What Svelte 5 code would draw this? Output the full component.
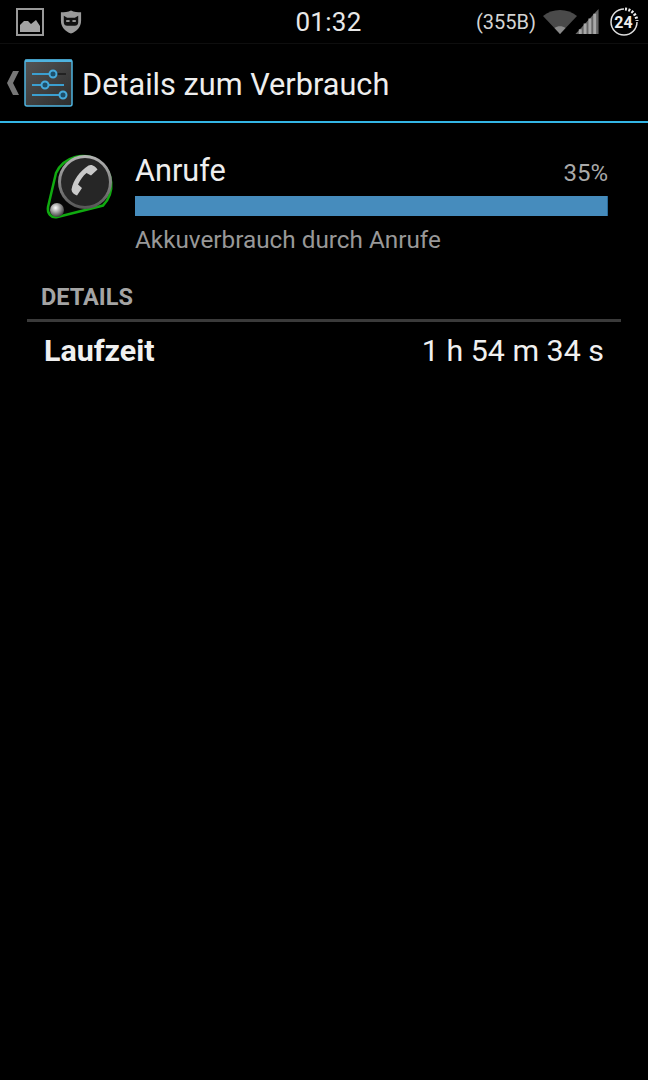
<script>
    const percent = 35;
</script>

<div class="screen">
    <header class="status-bar">
        <div class="status-left">
            <svg class="ic-picture" width="28" height="28" viewBox="0 0 28 28">
                <rect x="1" y="1" width="26" height="26" fill="none" stroke="#999" stroke-width="2" />
                <path d="M4 24V17L8 13 12 13 15 16 20 12 24 18V24Z" fill="#a3a3a3" />
            </svg>
            <svg class="ic-shield" width="22" height="25" viewBox="0 0 22 26">
                <path d="M11 1.500C8 3 4 3.500.5 3.500V12C.5 19 5 23.500 11 25.500 17 23.500 21.500 19 21.500 12V3.500C18 3.500 14 3 11 1.500Z" fill="#9a9a9a" />
                <path d="M3.500 7 7 9H15L18.500 7V14C18.500 16 17 17.500 15 17.500H7C5 17.500 3.500 16 3.500 14Z" fill="#111" />
                <rect x="6" y="11.500" width="3.500" height="2" fill="#999" />
                <rect x="12.500" y="11.500" width="3.500" height="2" fill="#999" />
            </svg>
        </div>
        <div class="clock">01:32</div>
        <div class="status-right">
            <span class="traffic">(355B)</span>
            <svg class="ic-wifi" width="34" height="24" viewBox="0 0 34 24">
                <path d="M0 6C9-2 25-2 34 6L17 24Z" fill="#4a4a4a" />
                <path d="M11.500 18C14.500 15.500 19.500 15.500 22.500 18L17 24Z" fill="#8a8a8a" />
            </svg>
            <svg class="ic-signal" width="24" height="25" viewBox="0 0 24 26">
                <path d="M0 26 24 0V26Z" fill="#666" />
                <path d="M5 26V21M10 26V15M15 26V10M20 26V5" stroke="#a8a8a8" stroke-width="3" />
            </svg>
            <svg class="ic-battery" width="30" height="30" viewBox="0 0 30 30">
                <path d="M15 2A13 13 0 1 0 28 15" fill="none" stroke="#ddd" stroke-width="1.500" />
                <path d="M16 2A13 13 0 0 1 28 14" fill="none" stroke="#eee" stroke-width="3" stroke-dasharray="2 1.500" />
                <text x="14.500" y="21" text-anchor="middle" class="battery-num">24</text>
            </svg>
        </div>
    </header>

    <div class="action-bar">
        <svg class="ic-back" width="12" height="24" viewBox="0 0 12 24">
            <path d="M6 0H12L6 12 12 24H6L0 12Z" fill="#777" />
        </svg>
        <svg class="ic-settings" width="49" height="48" viewBox="0 0 49 48">
            <defs>
                <linearGradient id="tile" x1="0" y1="0" x2="1" y2="1">
                    <stop offset="0" stop-color="#555" />
                    <stop offset="1" stop-color="#2c2c2c" />
                </linearGradient>
            </defs>
            <rect x="1" y="1" width="47" height="46" rx="2" fill="url(#tile)" stroke="#4fb4e0" stroke-width="1.500" />
            <rect x="1" y="0.500" width="47" height="2.500" fill="#4fb4e0" />
            <path d="M8 15H29M8 26H40M8 36H39" stroke="#3b9fd0" stroke-width="2" />
            <path d="M33 15H42" stroke="#222" stroke-width="2" />
            <circle cx="29" cy="15" r="3.500" fill="#1d4f6a" stroke="#45aadc" stroke-width="2" />
            <circle cx="21" cy="26" r="3.500" fill="#1d4f6a" stroke="#45aadc" stroke-width="2" />
            <circle cx="39" cy="36" r="3.500" fill="#1d4f6a" stroke="#45aadc" stroke-width="2" />
        </svg>
        <h1>Details zum Verbrauch</h1>
    </div>

    <main class="content">
        <section class="summary">
            <svg class="app-icon" width="70" height="70" viewBox="0 0 70 70">
                <defs>
                    <radialGradient id="knob" cx="0.4" cy="0.35" r="0.7">
                        <stop offset="0" stop-color="#fff" />
                        <stop offset="1" stop-color="#333" />
                    </radialGradient>
                    <linearGradient id="rim" x1="0" y1="0" x2="0" y2="1">
                        <stop offset="0" stop-color="#b5b5b5" />
                        <stop offset="1" stop-color="#555" />
                    </linearGradient>
                </defs>
                <path d="M11 22 3 56C2 62 6 67.500 12.500 66L58 54.500A29 29 0 1 0 11 22Z" fill="#060606" stroke="#10aa10" stroke-width="2.500" />
                <circle cx="40" cy="31" r="27" fill="url(#rim)" />
                <circle cx="40" cy="31" r="24" fill="#262626" />
                <path transform="translate(2 -1)" d="M41.500 15.500C45 13.500 49 17 50.500 19.500L44 25.500 39.500 23C36 26 33.500 29.500 31 34.500L35 38 30 45.500C27 44.500 24.500 42.500 24.500 39.500 26 30 33 21 41.500 15.500Z" fill="#c9c9c9" />
                <circle cx="12" cy="59" r="7" fill="url(#knob)" />
            </svg>
            <div class="summary-body">
                <div class="summary-head">
                    <span class="app-name">Anrufe</span>
                    <span class="percent">{percent}%</span>
                </div>
                <div class="bar"></div>
                <p class="desc">Akkuverbrauch durch Anrufe</p>
            </div>
        </section>

        <h2 class="section-title">DETAILS</h2>
        <div class="row">
            <span class="row-label">Laufzeit</span>
            <span class="row-value">1 h 54 m 34 s</span>
        </div>
    </main>
</div>

<style>
    :global(body) {
        margin: 0;
        background: #000;
    }

    .screen {
        width: 648px;
        height: 1080px;
        background: #000;
        color: #fff;
        font-family: Roboto, sans-serif;
        overflow: hidden;
    }

    .status-bar {
        height: 43px;
        border-bottom: 1px solid #0e0e0e;
        display: grid;
        grid-template-columns: 1fr auto 1fr;
        align-items: center;
    }

    .status-left {
        display: flex;
        align-items: center;
        gap: 16px;
        padding-left: 16px;
    }

    .clock {
        font-size: 26px;
        color: #e8e8e8;
        letter-spacing: 0.3px;
        margin-left: 9px;
    }

    .status-right {
        display: flex;
        align-items: center;
        justify-content: flex-end;
        padding-right: 9px;
    }

    .traffic {
        font-size: 20px;
        color: #d4d4d4;
        margin-right: 7px;
    }

    .ic-signal {
        margin-left: -2px;
        margin-right: 10px;
    }

    .battery-num {
        font-size: 16px;
        font-weight: 700;
        fill: #eee;
    }

    .action-bar {
        height: 77px;
        display: flex;
        align-items: center;
        border-bottom: 2px solid #33b5e5;
        padding-left: 7px;
    }

    .ic-settings {
        margin-left: 5px;
        flex-shrink: 0;
    }

    .action-bar h1 {
        margin: 3px 0 0 9px;
        font-size: 30.700px;
        font-weight: 400;
        color: #eee;
    }

    .content {
        padding: 23px 27px 0;
    }

    .summary {
        display: flex;
        padding-left: 18px;
    }

    .app-icon {
        flex-shrink: 0;
        margin-top: 5px;
    }

    .summary-body {
        flex: 1;
        margin-left: 20px;
    }

    .summary-head {
        display: flex;
        justify-content: space-between;
        align-items: baseline;
        box-sizing: border-box;
        height: 50px;
        padding-top: 7px;
    }

    .app-name {
        font-size: 30.700px;
        color: #eee;
    }

    .percent {
        font-size: 24px;
        color: #a9a9a9;
        margin-right: 13px;
    }

    .bar {
        height: 20px;
        margin-right: 13px;
        background: #468cbd;
        border-right: 1px solid #2a6a98;
        box-sizing: border-box;
    }

    .desc {
        margin: 9px 0 0;
        font-size: 24.300px;
        color: #989898;
    }

    .section-title {
        margin: 29px 0 0;
        padding: 0 0 8px 14px;
        font-size: 23.500px;
        font-weight: 700;
        color: #a4a4a4;
        border-bottom: 3px solid #3a3a3a;
    }

    .row {
        display: flex;
        justify-content: space-between;
        align-items: center;
        padding: 11px 17px;
    }

    .row-label {
        font-size: 30.400px;
        font-weight: 700;
        color: #f0f0f0;
    }

    .row-value {
        font-size: 30.400px;
        color: #f0f0f0;
    }
</style>
